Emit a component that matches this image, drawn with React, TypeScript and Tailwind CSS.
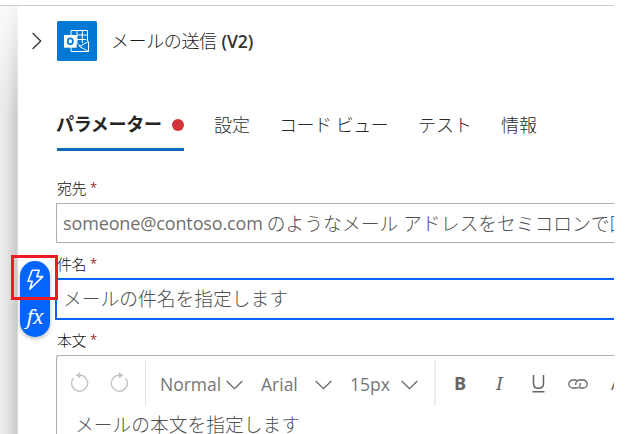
import type { ReactNode } from "react";

function Label({ children }: { children: ReactNode }) {
  return (
    <div className="flex h-5 items-center gap-[4px] text-[15px] text-[#111]">
      <span className="w-[29px] font-light tracking-[-0.4px]">{children}</span>
      <span className="text-[13px] text-[#a4262c]">*</span>
    </div>
  );
}

function Chevron() {
  return (
    <svg width="17" height="10" viewBox="0 0 17 10" fill="none" stroke="#666" strokeWidth="1.3" className="shrink-0">
      <path d="M0.7 1 8.5 8.7 16.3 1" />
    </svg>
  );
}

function RotateIcon({ flip = false }: { flip?: boolean }) {
  return (
    <svg width="18" height="20" viewBox="0 0 18 20" fill="none" className={flip ? "-scale-x-100" : ""}>
      <path d="M9 3.3H9.8A8 8 0 1 1 2.6 6" stroke="#c4c4c4" strokeWidth="1.4" />
      <path d="M9.2 0V6.6L4.6 3.3Z" fill="#c4c4c4" />
    </svg>
  );
}

function OutlookTile() {
  return (
    <svg width="40" height="40" viewBox="0 0 40 40" className="shrink-0">
      <rect width="40" height="40" rx="1.5" fill="#0078d4" />
      <g fill="none" stroke="#fff" strokeWidth="1">
        <path d="M14 14V9.5H30.5V20M20 14H30.5M20 18.5H29M20 9.5V23M25.3 9.5V22M14 26V30.5H31.5V20.5L22.5 25.5 31.5 30.5M21 23.5 23.5 25" />
      </g>
      <rect x="7" y="14" width="12.7" height="12.7" fill="#fff" />
      <ellipse cx="13.3" cy="20.3" rx="2.6" ry="3" fill="none" stroke="#0078d4" strokeWidth="1.7" />
    </svg>
  );
}

function TokenPicker() {
  return (
    <div className="absolute left-[20px] top-[261px] flex h-[76px] w-[30px] flex-col items-center rounded-full bg-[#0364ff] pt-[8px] shadow-[0_2px_4px_rgba(0,0,0,0.25)]">
      <svg width="18" height="22" viewBox="0 0 18 22" fill="none" stroke="#fff" strokeWidth="1.6" strokeLinejoin="round">
        <path d="M6.2 1.2H13.2L10.8 7.6H16.7L3.8 20.2 6.2 12.2H2Z" />
      </svg>
      <span className="mt-[14px] font-['Noto_Serif','Liberation_Serif',serif] text-[20px] italic leading-[24px] tracking-[-0.3px] text-white">fx</span>
    </div>
  );
}

export default function App() {
  return (
    <div className="h-[434px] w-[629px] overflow-hidden bg-white font-['Open_Sans','Noto_Sans_CJK_JP',sans-serif]">
      <div className="relative flex h-full w-[614px] flex-col overflow-hidden whitespace-nowrap">
        <div className="mt-[5px] h-px shrink-0 bg-[#cecece]" />
        <div className="flex min-h-0 grow">
          <div className="w-[18px] shrink-0 bg-[linear-gradient(to_bottom,rgba(255,255,255,0.8),rgba(255,255,255,0)_110px),linear-gradient(to_right,#ebebeb,#e4e4e4_40%,#cacaca_90%,#dedede)]" />
          <main className="min-w-0 grow pl-[38px]">
            <header className="-ml-[24px] mt-[15px] flex h-[40px] items-center">
              <svg width="10" height="18" viewBox="0 0 10 18" fill="none" stroke="#323130" strokeWidth="1.3" className="mr-[15px] shrink-0">
                <path d="M0.6 1 8.7 9 0.6 17" />
              </svg>
              <OutlookTile />
              <h1 className="ml-[14px] flex items-center pt-px text-[#1b1a19]">
                <span className="text-[18px] font-light tracking-[-0.4px]">メールの送信</span>
                <span className="ml-[5px] text-[17.5px] font-semibold tracking-[-0.1px] text-[#323130]">(V2)</span>
              </h1>
            </header>
            <nav className="mt-[47px] ml-px flex h-[43px] text-[18px] font-light text-[#2b2b2b]">
              <div className="flex h-full w-[127px] items-center justify-between border-b-[3px] border-[#0f6cbd] pb-[7px] text-[#242424]">
                <span className="-ml-px font-bold tracking-[-0.3px]">パラメーター</span>
                <span className="mt-px size-[12px] rounded-full bg-[#d13438]" />
              </div>
              <span className="ml-[30px] flex h-[34px] w-[65px] items-center">設定</span>
              <span className="flex h-[34px] w-[139px] items-center tracking-[-0.5px]">コード ビュー</span>
              <span className="flex h-[34px] w-[83px] items-center">テスト</span>
              <span className="flex h-[34px] items-center">情報</span>
            </nav>
            <div className="mt-[27px] ml-px"><Label>宛先</Label></div>
            <div className="mt-[5px] flex h-[40px] items-center border border-r-0 border-[#adadad] pl-[6px] text-[18px] text-[#707070]">
              <span className="tracking-[-0.13px]">someone@contoso.com</span>
              <span className="ml-[4px] pt-[2px] text-[18.75px] font-light tracking-[0.02px] text-[#505050]">のようなメール アドレスをセミコロンで区切って指定します</span>
            </div>
            <div className="mt-[11px] ml-px"><Label>件名</Label></div>
            <div className="-ml-px mt-[4px] flex h-[42px] items-center border-2 border-r-0 border-[#0364ff] pl-[6px] pt-px text-[18.75px] font-light text-[#505050]">
              メールの件名を指定します
            </div>
            <div className="mt-[10px] ml-px"><Label>本文</Label></div>
            <section className="mt-[5px] h-[90px] rounded-tl-[3px] border border-r-0 border-[#adadad]">
              <div className="mt-[5px] flex h-[45px] items-center text-[17.5px] text-[#757575]">
                <div className="flex h-full w-[89px] shrink-0 items-center gap-[21px] border-r border-[#e5e5e5] pb-[3px] pl-[14px]">
                  <RotateIcon />
                  <RotateIcon flip />
                </div>
                <div className="flex h-full w-[290px] shrink-0 items-center border-r-2 border-[#ededed] pt-[2px] pl-[14px]">
                  <span className="w-[66px] shrink-0">Normal</span><Chevron />
                  <span className="ml-[18px] w-[54px] shrink-0">Arial</span><Chevron />
                  <span className="ml-[18px] w-[51px] shrink-0">15px</span><Chevron />
                </div>
                <div className="flex h-full shrink-0 items-center pl-[18px] text-[#666]">
                  <span className="w-[42px] text-[18px] font-bold">B</span>
                  <span className="w-[36px] font-['Noto_Serif','DejaVu_Serif',serif] text-[18px] italic">I</span>
                  <svg width="13" height="18" viewBox="0 0 13 18" fill="none" stroke="#666" strokeWidth="1.5" className="shrink-0">
                    <path d="M1.5 0V8.5Q1.5 13.3 6.5 13.3T11.5 8.5V0M.5 16.8H12.5" />
                  </svg>
                  <svg width="20" height="10" viewBox="0 0 20 10" fill="none" stroke="#666" strokeWidth="1.3" className="ml-[23px] shrink-0">
                    <path d="M8.5 1H4.8a4 4 0 0 0 0 8h3.5a4 4 0 0 0 4-4V4M11.5 9h3.7a4 4 0 0 0 0-8h-3.5a4 4 0 0 0-4 4v1" />
                  </svg>
                  <span className="ml-[23px] text-[18px]">A</span>
                </div>
              </div>
              <div className="mt-[6px] pl-[18px] text-[18.75px] font-light leading-[26px] text-[#505050]">メールの本文を指定します</div>
            </section>
          </main>
        </div>
        <TokenPicker />
        <div className="absolute left-[11px] top-[255px] h-[45px] w-[47px] border-[3px] border-[#ed1c24]" />
      </div>
    </div>
  );
}
